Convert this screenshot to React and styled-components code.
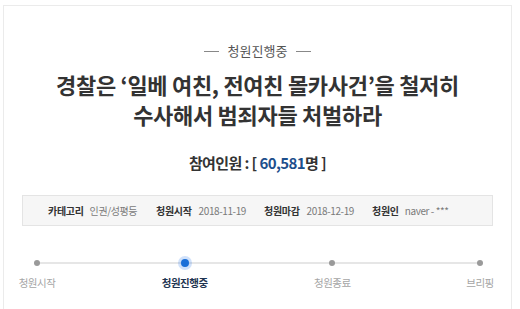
import React from "react";
import styled, { createGlobalStyle } from "styled-components";

const Global = createGlobalStyle`
  html, body { margin: 0; padding: 0; background: #fff; }
  body { font-family: "Noto Sans CJK KR", "Noto Sans", sans-serif; }
`;

const Card = styled.div`
  box-sizing: border-box;
  margin: 5px 0 0 3px;
  width: 509px;
  height: 310px;
  border: 1px solid #ebebeb;
  border-bottom: none;
  padding-top: 37px;
`;

const Status = styled.div`
  display: flex;
  align-items: center;
  justify-content: center;
  gap: 9px;
  font-size: 13px;
  line-height: 16px;
  color: #555;
  &::before, &::after {
    content: "";
    width: 15px;
    height: 1px;
    background: #888;
  }
`;

const Title = styled.h1`
  margin: 10px 0 0;
  text-align: center;
  font-size: 22px;
  line-height: 30px;
  font-weight: 700;
  color: #333;
  letter-spacing: -0.3px;
`;

const TitleLine = styled.span`
  display: block;
`;

const Count = styled.div`
  margin-top: 23px;
  text-align: center;
  font-size: 15px;
  line-height: 22px;
  font-weight: 700;
  color: #333;
  letter-spacing: -0.6px;
`;

const Num = styled.span`
  color: #1d4f8c;
`;

const InfoBox = styled.div`
  box-sizing: border-box;
  margin: 21px 18px 0 18px;
  height: 31px;
  background: #f6f6f6;
  border: 1px solid #e4e4e4;
  display: flex;
  align-items: center;
  padding-left: 25px;
  font-size: 10px;
`;

const InfoItem = styled.div`
  display: flex;
  align-items: center;
  gap: ${p => p.$gap}px;
  width: ${p => p.$w}px;
`;

const Label = styled.span`
  font-weight: 700;
  color: #333;
  letter-spacing: -0.3px;
`;

const Value = styled.span`
  color: #7a7a7a;
  letter-spacing: -0.4px;
`;

const Progress = styled.div`
  position: relative;
  margin: 33px 11px 0 13px;
  display: flex;
  justify-content: space-between;
  &::before {
    content: "";
    position: absolute;
    left: 20px;
    right: 20px;
    top: 3px;
    height: 2px;
    background: #e6e6e6;
  }
`;

const Step = styled.div`
  position: relative;
  width: 40px;
  display: flex;
  flex-direction: column;
  align-items: center;
  gap: 9px;
`;

const Dot = styled.span`
  display: block;
  box-sizing: border-box;
  width: ${p => (p.$active ? 8 : 6)}px;
  height: ${p => (p.$active ? 8 : 6)}px;
  margin-top: ${p => (p.$active ? 0 : 1)}px;
  margin-bottom: ${p => (p.$active ? 0 : 1)}px;
  border-radius: 50%;
  background: ${p => (p.$active ? "#1a6fd8" : "#9a9a9a")};
  box-shadow: ${p => (p.$active ? "0 0 0 3px rgba(40,120,230,0.22)" : "none")};
`;

const StepLabel = styled.span`
  white-space: nowrap;
  font-size: 10.5px;
  line-height: 14px;
  color: ${p => (p.$active ? "#1f3552" : "#a5a5a5")};
  font-weight: ${p => (p.$active ? 700 : 400)};
  letter-spacing: -0.5px;
`;

const steps = [
  { label: "청원시작" },
  { label: "청원진행중", active: true },
  { label: "청원종료" },
  { label: "브리핑" },
];

const info = [
  { label: "카테고리", value: "인권/성평등", w: 108, gap: 6 },
  { label: "청원시작", value: "2018-11-19", w: 108, gap: 7 },
  { label: "청원마감", value: "2018-12-19", w: 108, gap: 7 },
  { label: "청원인", value: "naver - ***", w: 80, gap: 6 },
];

export default function App() {
  return (
    <>
      <Global />
      <Card>
        <Status>청원진행중</Status>
        <Title>
          <TitleLine>경찰은 ‘일베 여친, 전여친 몰카사건’을 철저히</TitleLine>
          <TitleLine>수사해서 범죄자들 처벌하라</TitleLine>
        </Title>
        <Count>
          참여인원 : [ <Num>60,581</Num>명 ]
        </Count>
        <InfoBox>
          {info.map(i => (
            <InfoItem key={i.label} $w={i.w} $gap={i.gap}>
              <Label>{i.label}</Label>
              <Value>{i.value}</Value>
            </InfoItem>
          ))}
        </InfoBox>
        <Progress>
          {steps.map(s => (
            <Step key={s.label}>
              <Dot $active={s.active} />
              <StepLabel $active={s.active}>{s.label}</StepLabel>
            </Step>
          ))}
        </Progress>
      </Card>
    </>
  );
}
